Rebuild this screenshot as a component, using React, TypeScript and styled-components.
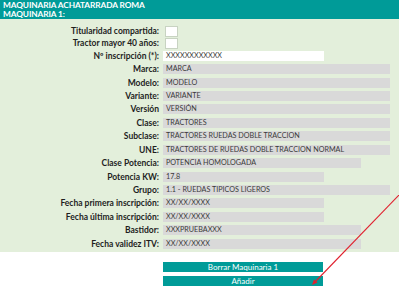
import React from "react";
import styled, { createGlobalStyle } from "styled-components";

const Global = createGlobalStyle`
  html, body { margin: 0; padding: 0; background: #ffffff; }
  body { font-family: "Lato", "Open Sans", Arial, sans-serif; }
`;

const Page = styled.div`
  position: relative;
  width: 399px;
  height: 291px;
  overflow: hidden;
  background: #ffffff;
`;

const Header = styled.div`
  background: #009b98;
  color: #ffffff;
  font-weight: 700;
  font-size: 8.3px;
  letter-spacing: -0.1px;
`;

const TitleRow = styled.div<{ $h: number }>`
  height: ${(p) => p.$h}px;
  line-height: ${(p) => p.$h}px;
  padding-left: 3px;
`;

const Panel = styled.div`
  background: #e3efdb;
  padding: 6px 0 2px 0;
`;

const Row = styled.div<{ $h: number }>`
  display: flex;
  align-items: center;
  height: ${(p) => p.$h}px;
`;

const Label = styled.div`
  width: 161px;
  box-sizing: border-box;
  padding-right: 2px;
  text-align: right;
  font-weight: 700;
  font-size: 8.5px;
  color: #1e1e1e;
  white-space: nowrap;
`;

const Field = styled.div<{ $w: number; $white?: boolean }>`
  margin-left: 2px;
  width: ${(p) => p.$w}px;
  height: 10px;
  box-sizing: border-box;
  padding-left: 3px;
  background: ${(p) => (p.$white ? "#ffffff" : "#d9d9d9")};
  color: #3a3a3a;
  font-size: 7.2px;
  line-height: 10px;
  white-space: nowrap;
  overflow: hidden;
`;

const Check = styled.div`
  margin-left: 4px;
  width: 11px;
  height: 9px;
  background: #ffffff;
  border: 1px solid #c8d3c2;
`;

const Buttons = styled.div`
  display: flex;
  flex-direction: column;
  gap: 4px;
  padding: 10px 0 0 163px;
`;

const Button = styled.div`
  width: 160px;
  height: 10px;
  background: #009b98;
  color: #ffffff;
  font-size: 8px;
  line-height: 10px;
  text-align: center;
`;

const Arrow = styled.svg`
  position: absolute;
  left: 0;
  top: 0;
  pointer-events: none;
`;

type F = { label: string; value: string; w: number; white?: boolean };

const fields: F[] = [
  { label: "Nº inscripción (*):", value: "XXXXXXXXXXXX", w: 161, white: true },
  { label: "Marca:", value: "MARCA", w: 227 },
  { label: "Modelo:", value: "MODELO", w: 227 },
  { label: "Variante:", value: "VARIANTE", w: 227 },
  { label: "Versión", value: "VERSIÓN", w: 227 },
  { label: "Clase:", value: "TRACTORES", w: 227 },
  { label: "Subclase:", value: "TRACTORES RUEDAS DOBLE TRACCION", w: 227 },
  { label: "UNE:", value: "TRACTORES DE RUEDAS DOBLE TRACCION NORMAL", w: 227 },
  { label: "Clase Potencia:", value: "POTENCIA HOMOLOGADA", w: 198 },
  { label: "Potencia KW:", value: "17.8", w: 161 },
  { label: "Grupo:", value: "1.1 - RUEDAS TIPICOS LIGEROS", w: 227 },
  { label: "Fecha primera inscripción:", value: "XX/XX/XXXX", w: 161 },
  { label: "Fecha última inscripción:", value: "XX/XX/XXXX", w: 161 },
  { label: "Bastidor:", value: "XXXPRUEBAXXX", w: 198 },
  { label: "Fecha validez ITV:", value: "XX/XX/XXXX", w: 198 },
];

export default function App() {
  return (
    <Page>
      <Global />
      <Header>
        <TitleRow $h={10}>MAQUINARIA ACHATARRADA ROMA</TitleRow>
        <TitleRow $h={9}>MAQUINARIA 1:</TitleRow>
      </Header>
      <Panel>
        <Row $h={12}>
          <Label>Titularidad compartida:</Label>
          <Check />
        </Row>
        <Row $h={12}>
          <Label>Tractor mayor 40 años:</Label>
          <Check />
        </Row>
        {fields.map((f) => (
          <Row $h={13.43} key={f.label}>
            <Label>{f.label}</Label>
            <Field $w={f.w} $white={f.white}>
              {f.value}
            </Field>
          </Row>
        ))}
      </Panel>
      <Buttons>
        <Button>Borrar Maquinaria 1</Button>
        <Button>Añadir</Button>
      </Buttons>
      <Arrow width="399" height="291" viewBox="0 0 399 291">
        <line x1="401" y1="193" x2="314" y2="283" stroke="#e0202e" strokeWidth="1.1" />
        <polygon points="312,285 314,279.5 317.5,282.5" fill="#e0202e" />
      </Arrow>
    </Page>
  );
}
